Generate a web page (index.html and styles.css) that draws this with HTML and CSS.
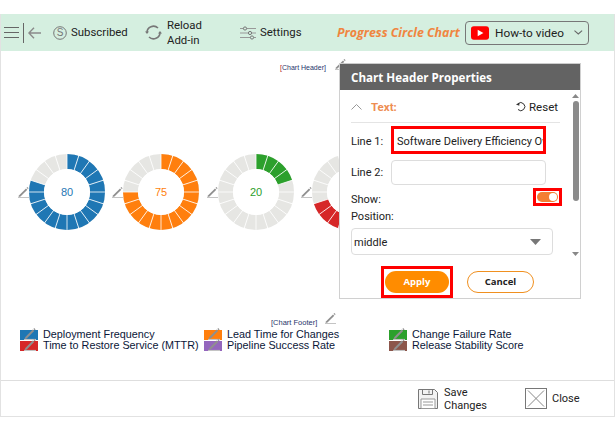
FILE: index.html
```html
<!DOCTYPE html>
<html lang="en">
<head>
<meta charset="utf-8">
<title>Progress Circle Chart</title>
<link rel="stylesheet" href="styles.css">
</head>
<body>
<svg class="defs" width="0" height="0" aria-hidden="true">
  <defs>
    <symbol id="pencil" viewBox="0 0 12 12">
      <path d="M2.2 9.2 9 2.4l1.3 1.3-6.8 6.8-2 .6z" fill="#8f8f8f"/>
      <path d="M9.6 1.8l.8-.8 1.2 1.2-.8.8z" fill="#8f8f8f"/>
      <path d="M1 11.5h11" stroke="#c4c4c4" stroke-width="1"/>
    </symbol>
    <g id="spokes" stroke="#fff" stroke-width=".8">
      <path d="M39 0v78" transform="rotate(0 39 39)"/>
      <path d="M39 0v78" transform="rotate(18 39 39)"/>
      <path d="M39 0v78" transform="rotate(36 39 39)"/>
      <path d="M39 0v78" transform="rotate(54 39 39)"/>
      <path d="M39 0v78" transform="rotate(72 39 39)"/>
      <path d="M39 0v78" transform="rotate(90 39 39)"/>
      <path d="M39 0v78" transform="rotate(108 39 39)"/>
      <path d="M39 0v78" transform="rotate(126 39 39)"/>
      <path d="M39 0v78" transform="rotate(144 39 39)"/>
      <path d="M39 0v78" transform="rotate(162 39 39)"/>
    </g>
  </defs>
</svg>
<div class="app">
  <header class="toolbar">
    <div class="nav">
      <svg class="ic-menu" width="15" height="13" viewBox="0 0 15 13"><path d="M0 1.5h15M0 6.5h15M0 11.5h15" stroke="#666" stroke-width="1.2"/></svg>
      <span class="sep"></span>
      <svg class="ic-back" width="13" height="12" viewBox="0 0 13 12"><path d="M6 .7.9 6 6 11.3M1 6h12" fill="none" stroke="#8a8a8a" stroke-width="1.4"/></svg>
    </div>
    <div class="tool tool-sub">
      <svg width="14" height="14" viewBox="0 0 14 14"><circle cx="7" cy="7" r="6.3" fill="none" stroke="#777" stroke-width="1"/><text x="7" y="10.4" text-anchor="middle" class="dollar">S</text></svg>
      <span>Subscribed</span>
    </div>
    <div class="tool tool-reload">
      <svg width="17" height="15" viewBox="0 0 17 15"><path d="M2 7.5A6.5 6.3 0 0 1 13 3" fill="none" stroke="#777" stroke-width="1.6"/><path d="M15 7.5A6.5 6.3 0 0 1 4 12" fill="none" stroke="#777" stroke-width="1.6"/><path d="M0 6.5h4L2 9zM13 8.500h4L15 6z" fill="#777"/></svg>
      <span>Reload<br>Add-in</span>
    </div>
    <div class="tool tool-set">
      <svg width="16" height="14" viewBox="0 0 16 14"><path d="M0 2.500h16M0 7h16M0 11.500h16" stroke="#999" stroke-width="1"/><circle cx="5" cy="2.500" r="1.600" fill="#d5efe0" stroke="#777"/><circle cx="10" cy="7" r="1.600" fill="#d5efe0" stroke="#777"/><circle cx="12" cy="11.500" r="1.600" fill="#d5efe0" stroke="#777"/></svg>
      <span>Settings</span>
    </div>
    <div class="title">Progress Circle Chart</div>
    <div class="howto">
      <svg width="19" height="14" viewBox="0 0 19 14"><rect width="19" height="14" rx="3" fill="#f00"/><path d="M7 3.500v7l6-3.500z" fill="#fff"/></svg>
      <span class="howto-label">How-to video</span>
      <svg width="9" height="5" viewBox="0 0 9 5"><path d="M.5.500l4 3.500 4-3.500" fill="none" stroke="#666" stroke-width="1.100"/></svg>
    </div>
  </header>

  <main class="canvas">
    <div class="chart-header">
      <span class="tag"><b class="br">[</b>Chart Header<b>]</b></span>
      <svg class="pen pen-head"><use href="#pencil"/></svg>
    </div>

    <div class="donuts">
      <div class="donut-item">
        <svg class="pen"><use href="#pencil"/></svg>
        <svg class="donut" viewBox="0 0 78 78">
          <circle class="track" cx="39" cy="39" r="30.500"/>
          <circle class="arc blue" cx="39" cy="39" r="30.500" pathLength="100" stroke-dasharray="80 100"/>
          <use href="#spokes"/><circle class="hole" cx="39" cy="39" r="23"/>
          <text class="val t-blue" x="39" y="43">80</text>
        </svg>
      </div>
      <div class="donut-item">
        <svg class="pen"><use href="#pencil"/></svg>
        <svg class="donut" viewBox="0 0 78 78">
          <circle class="track" cx="39" cy="39" r="30.500"/>
          <circle class="arc orange" cx="39" cy="39" r="30.500" pathLength="100" stroke-dasharray="75 100"/>
          <use href="#spokes"/><circle class="hole" cx="39" cy="39" r="23"/>
          <text class="val t-orange" x="39" y="43">75</text>
        </svg>
      </div>
      <div class="donut-item">
        <svg class="pen"><use href="#pencil"/></svg>
        <svg class="donut" viewBox="0 0 78 78">
          <circle class="track" cx="39" cy="39" r="30.500"/>
          <circle class="arc green" cx="39" cy="39" r="30.500" pathLength="100" stroke-dasharray="20 100"/>
          <use href="#spokes"/><circle class="hole" cx="39" cy="39" r="23"/>
          <text class="val t-green" x="39" y="43">20</text>
        </svg>
      </div>
      <div class="donut-item">
        <svg class="pen"><use href="#pencil"/></svg>
        <svg class="donut" viewBox="0 0 78 78">
          <circle class="track" cx="39" cy="39" r="30.500"/>
          <circle class="arc red" cx="39" cy="39" r="30.500" pathLength="100" stroke-dasharray="70 100"/>
          <use href="#spokes"/><circle class="hole" cx="39" cy="39" r="23"/>
        </svg>
      </div>
    </div>

    <div class="chart-footer">
      <span class="tag tag-foot">[Chart Footer]</span>
      <svg class="pen pen-foot"><use href="#pencil"/></svg>
    </div>

    <div class="legend">
      <div class="leg"><span class="sw bg-blue"><svg class="sw-pen"><use href="#pencil"/></svg></span>Deployment Frequency</div>
      <div class="leg"><span class="sw bg-orange"><svg class="sw-pen"><use href="#pencil"/></svg></span>Lead Time for Changes</div>
      <div class="leg"><span class="sw bg-green"><svg class="sw-pen"><use href="#pencil"/></svg></span>Change Failure Rate</div>
      <div class="leg"><span class="sw bg-red"><svg class="sw-pen"><use href="#pencil"/></svg></span>Time to Restore Service (MTTR)</div>
      <div class="leg"><span class="sw bg-purple"><svg class="sw-pen"><use href="#pencil"/></svg></span>Pipeline Success Rate</div>
      <div class="leg"><span class="sw bg-brown"><svg class="sw-pen"><use href="#pencil"/></svg></span>Release Stability Score</div>
    </div>

    <aside class="panel">
      <div class="panel-head">Chart Header Properties</div>
      <div class="panel-body">
        <div class="panel-form">
          <div class="sec">
            <svg width="11" height="6" viewBox="0 0 11 6"><path d="M.5 5.500l5-5 5 5" fill="none" stroke="#999" stroke-width="1"/></svg>
            <span class="sec-title">Text:</span>
            <span class="reset">
              <svg width="10" height="11" viewBox="0 0 10 11"><path d="M2 2.800A4 4 0 1 1 2 8.500" fill="none" stroke="#333" stroke-width="1"/><path d="M0 3.500l3.300-2v3.300z" fill="#333"/></svg>
              Reset
            </span>
          </div>
          <div class="row r1">
            <label>Line 1:</label>
            <div class="input hl">Software Delivery Efficiency Ov</div>
          </div>
          <div class="row r2">
            <label>Line 2:</label>
            <div class="input"></div>
          </div>
          <div class="row r3">
            <label>Show:</label>
            <span class="hl-toggle"><span class="toggle"><span class="knob"></span></span></span>
          </div>
          <div class="pos-label">Position:</div>
          <div class="select">middle<svg width="11" height="6" viewBox="0 0 11 6"><path d="M0 0h11L5.500 6z" fill="#777"/></svg></div>
        </div>
        <div class="scroll">
          <svg class="arr" width="7" height="4" viewBox="0 0 7 4"><path d="M3.500 0 7 4H0z" fill="#888"/></svg>
          <span class="thumb"></span>
          <svg class="arr" width="7" height="4" viewBox="0 0 7 4"><path d="M3.500 4 7 0H0z" fill="#888"/></svg>
        </div>
      </div>
      <div class="actions">
        <span class="hl-apply"><span class="btn apply">Apply</span></span>
        <span class="btn cancel">Cancel</span>
      </div>
    </aside>
  </main>

  <footer class="bottom">
    <div class="foot-btn save">
      <svg width="22" height="22" viewBox="0 0 22 22"><path d="M1.500 1.500h16l3 3v16h-19z" fill="#f2f2f2" stroke="#777"/><path d="M5.500 1.500v5h10v-5M12 2.500v3" fill="none" stroke="#777"/><path d="M4 11h14v9.500H4z" fill="#fff" stroke="#999"/><path d="M6 14h10M6 17h10" stroke="#999"/></svg>
      <span>Save<br>Changes</span>
    </div>
    <div class="foot-btn close">
      <svg width="22" height="21" viewBox="0 0 22 21"><rect x=".5" y=".5" width="21" height="20" fill="#fff" stroke="#777"/><path d="M3 2.500l16 16M19 2.500l-16 16" stroke="#888"/></svg>
      <span>Close</span>
    </div>
  </footer>
</div>
</body>
</html>
```
FILE: styles.css
```css
* { box-sizing: border-box; }
html, body { margin: 0; padding: 0; background: #fff; }
body { width: 615px; height: 431px; overflow: hidden; font-family: Roboto, "Open Sans", sans-serif; color: #222; }
.defs { position: absolute; }
.app { margin-top: 14px; width: 615px; height: 403px; border: 1px solid #e2e2e2; border-top: 0; display: flex; flex-direction: column; }

.toolbar { height: 37px; flex: none; background: #d5efe0; display: flex; align-items: center; font-size: 11.400px; position: relative; }
.nav { display: flex; align-items: center; margin-left: 3px; width: 49px; }
.sep { width: 1px; height: 20px; background: #666; margin: 0 4px 0 4px; }
.tool { display: flex; align-items: center; gap: 4px; line-height: 15px; }
.tool-sub { width: 92px; }
.tool-reload { width: 95px; gap: 5px; }
.tool-set { width: 97px; }
.dollar { font: 10px "Liberation Sans", sans-serif; fill: #777; }
.title { font-family: "Open Sans", sans-serif; font-size: 12.400px; font-weight: 700; font-style: italic; color: #f0853f; width: 128px; white-space: nowrap; }
.howto { width: 124px; height: 24px; border: 1px solid #777; border-radius: 4px; display: flex; align-items: center; padding: 0 5px; gap: 6px; font-size: 11.800px; }
.howto-label { width: 77px; white-space: nowrap; }

.canvas { height: 330px; flex: none; position: relative; border-bottom: 1px solid #dedede; display: flex; flex-direction: column; background: #fff; }
.chart-header { height: 16px; margin-top: 8px; padding-left: 279px; display: flex; align-items: center; }
.tag { font: 7px "Liberation Sans", sans-serif; color: #27356b; white-space: nowrap; }
.tag .br { color: #b02020; font-weight: 400; }
.tag b { font-weight: 400; }
.pen { width: 12px; height: 12px; flex: none; }
.pen-head { margin-left: 8px; margin-top: -6px; }

.donuts { display: grid; grid-template-columns: repeat(4, 94.33px); margin-top: 78px; margin-left: 16px; height: 78px; flex: none; }
.donut-item { display: flex; align-items: center; gap: 0; height: 78px; }
.donut-item .pen { margin-right: -1px; }
.donut { width: 78px; height: 78px; flex: none; }
.track, .arc { fill: none; stroke-width: 15; }
.track { stroke: #e6e6e3; }
.arc { transform: rotate(-90deg); transform-origin: 39px 39px; }
.hole { fill: #fff; }
.blue { stroke: #1f77b4; }
.orange { stroke: #ff7f0e; }
.green { stroke: #2ca02c; }
.red { stroke: #d62728; }
.val { font: 11px "Liberation Sans", sans-serif; text-anchor: middle; }
.t-blue { fill: #1f77b4; }
.t-orange { fill: #ff7f0e; }
.t-green { fill: #2ca02c; }

.chart-footer { margin-top: 82px; padding-left: 270px; height: 14px; display: flex; align-items: flex-end; }
.tag-foot { font-size: 7.500px; color: #27356b; }
.pen-foot { margin-left: 7px; margin-bottom: 3px; }

.legend { display: grid; grid-template-columns: 184px 185px auto; grid-auto-rows: 11px; margin: 2px 0 0 19px; font: 10.800px/11px "Liberation Sans", sans-serif; color: #0a1638; }
.leg { display: flex; align-items: center; gap: 5px; white-space: nowrap; }
.sw { width: 18px; height: 10px; position: relative; flex: none; }
.bg-blue { background: #1f77b4; }
.bg-orange { background: #ff7f0e; }
.bg-green { background: #2ca02c; }
.bg-red { background: #d62728; }
.bg-purple { background: #9467bd; }
.bg-brown { background: #8c564b; }
.sw-pen { position: absolute; left: 3px; top: -4px; width: 13px; height: 15px; }

.panel { position: absolute; left: 338px; top: 12px; width: 242px; height: 236px; background: #fff; border: 1px solid #d0d0d0; border-top-color: #ccc; display: flex; flex-direction: column; font-size: 11px; }
.panel-head { height: 26px; flex: none; background: #636363; color: #fff; font-family: "Open Sans", sans-serif; font-weight: 700; font-size: 11.600px; line-height: 28px; padding-left: 11px; }
.panel-body { flex: 1; display: flex; min-height: 0; }
.panel-form { width: 231px; padding: 0 11px 0 11px; }
.sec { height: 33px; border-bottom: 1px solid #e4e4e4; display: flex; align-items: center; padding-top: 1px; }
.sec-title { margin-left: 9px; color: #ee8d52; font-weight: 700; font-size: 11.500px; }
.reset { margin-left: auto; margin-right: 2px; display: flex; align-items: center; gap: 3px; font-size: 11.500px; }
.row { display: flex; align-items: center; }
.row label { width: 40px; flex: none; }
.r1 { margin-top: 3px; }
.r1 label { padding-top: 3px; }
.r2 { margin-top: 6px; }
.input { width: 155px; height: 25px; border: 1px solid #ddd; border-radius: 4px; line-height: 23px; padding-left: 3px; white-space: nowrap; overflow: hidden; }
.input.hl { height: 28px; border: 3px solid #f00; border-radius: 0; line-height: 25px; padding-left: 3px; }
.r3 { justify-content: space-between; height: 19px; margin-top: 2px; padding-right: 0; }
.r3 label { margin-top: 5px; }
.hl-toggle { border: 3px solid #f00; padding: 1px; margin-right: -2px; }
.toggle { display: block; width: 21px; height: 10px; border-radius: 5px; background: #f47e33; position: relative; }
.knob { position: absolute; right: 1px; top: 1px; width: 8px; height: 8px; border-radius: 50%; background: #fff; }
.pos-label { margin-top: 3px; line-height: 15px; }
.select { width: 202px; height: 27px; margin-top: 4px; border: 1px solid #ddd; border-radius: 4px; display: flex; align-items: center; justify-content: space-between; padding: 1px 11px 0 2px; }
.scroll { width: 9px; margin-left: 0; display: flex; flex-direction: column; align-items: center; padding-top: 4px; height: 166px; }
.arr { flex: none; }
.thumb { width: 6px; height: 100px; background: #8b8b8b; border-radius: 3px; margin: 3px 0 auto; }
.actions { height: 34px; flex: none; display: flex; align-items: center; padding: 2px 0 0 41px; }
.hl-apply { border: 3px solid #f00; padding: 2px 1px; display: block; }
.btn { display: block; width: 64px; height: 22px; border-radius: 11px; text-align: center; line-height: 21px; font-family: "Open Sans", sans-serif; font-weight: 700; font-size: 9.500px; }
.apply { background: #ff8c00; color: #fff; }
.cancel { width: 67px; margin-left: 14px; border: 1px solid #f09020; color: #222; line-height: 20px; }

.bottom { height: 35px; flex: none; display: flex; align-items: center; font-size: 11px; line-height: 13px; }
.foot-btn { display: flex; align-items: center; gap: 5px; }
.save { margin-left: 416px; width: 108px; }
.bottom span { display: block; }
```
